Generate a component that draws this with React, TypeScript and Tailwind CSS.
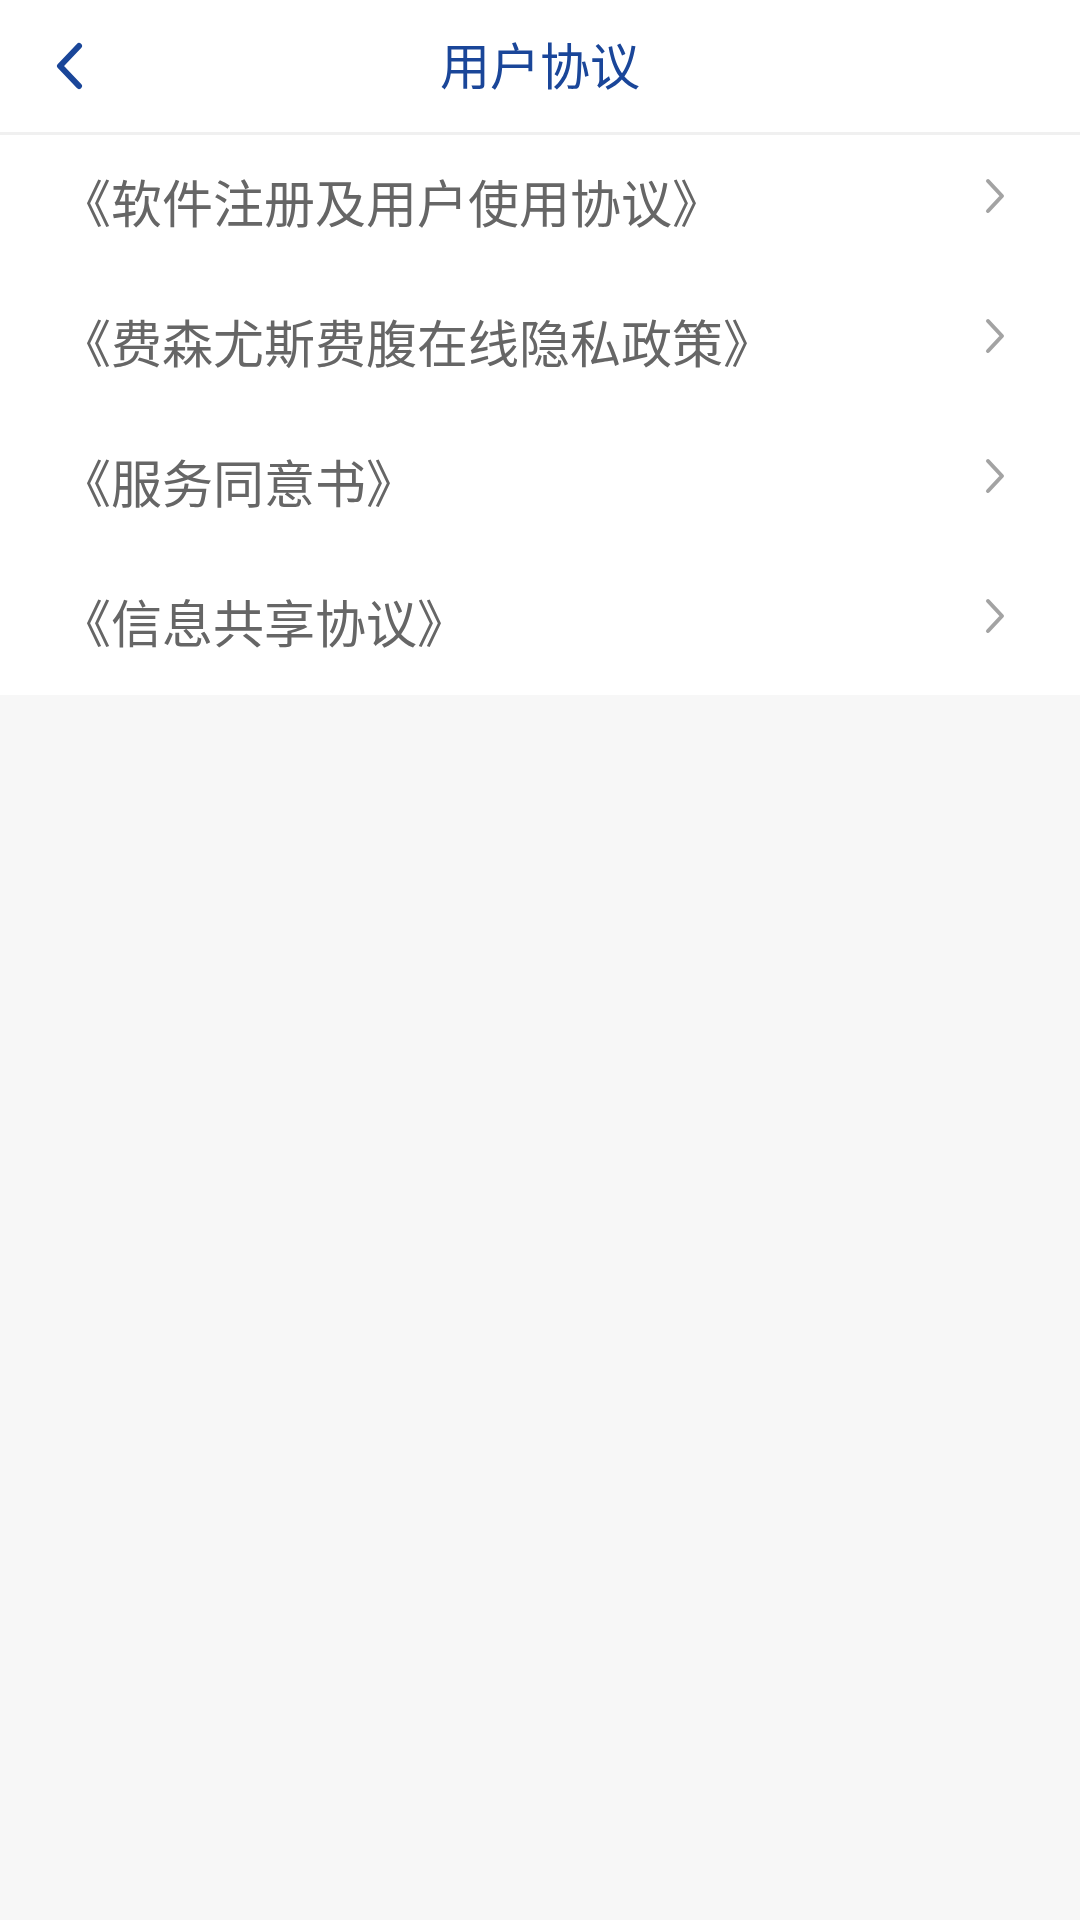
import React from 'react';

const agreements = [
  '《软件注册及用户使用协议》',
  '《费森尤斯费腹在线隐私政策》',
  '《服务同意书》',
  '《信息共享协议》',
];

const BackIcon: React.FC = () => (
  <svg width="30" height="48" viewBox="0 0 30 48" fill="none">
    <polyline
      points="25,4 6,24 25,44"
      stroke="#1a4699"
      strokeWidth="6"
      strokeLinecap="round"
      strokeLinejoin="round"
    />
  </svg>
);

const ChevronIcon: React.FC = () => (
  <svg width="22" height="36" viewBox="0 0 22 36" fill="none">
    <polyline
      points="4,3 18,18 4,33"
      stroke="#a3a3a3"
      strokeWidth="4"
      strokeLinecap="round"
      strokeLinejoin="round"
    />
  </svg>
);

const App: React.FC = () => {
  return (
    <div
      className="w-[1080px] min-h-[1920px] bg-[#f7f7f7]"
      style={{ fontFamily: '"Noto Sans CJK SC", "Noto Sans", sans-serif' }}
    >
      {/* Header */}
      <div className="h-[135px] bg-white border-b-[3px] border-[#f0f0f0] grid grid-cols-[1fr_auto_1fr] items-center">
        <div className="pl-[54px] flex items-center">
          <BackIcon />
        </div>
        <h1 className="-mt-[6px] text-[50px] leading-none text-[#1a4699] font-normal">用户协议</h1>
        <div />
      </div>

      {/* Agreement list */}
      <div className="bg-white">
        {agreements.map((title, index) => (
          <div key={index} className="h-[140px] flex items-center justify-between pl-[60px] pr-[74px]">
            <span className="-mt-[8px] text-[51px] leading-none text-[#666666]">{title}</span>
            <div className="-mt-[18px]">
              <ChevronIcon />
            </div>
          </div>
        ))}
      </div>
    </div>
  );
};

export default App;
